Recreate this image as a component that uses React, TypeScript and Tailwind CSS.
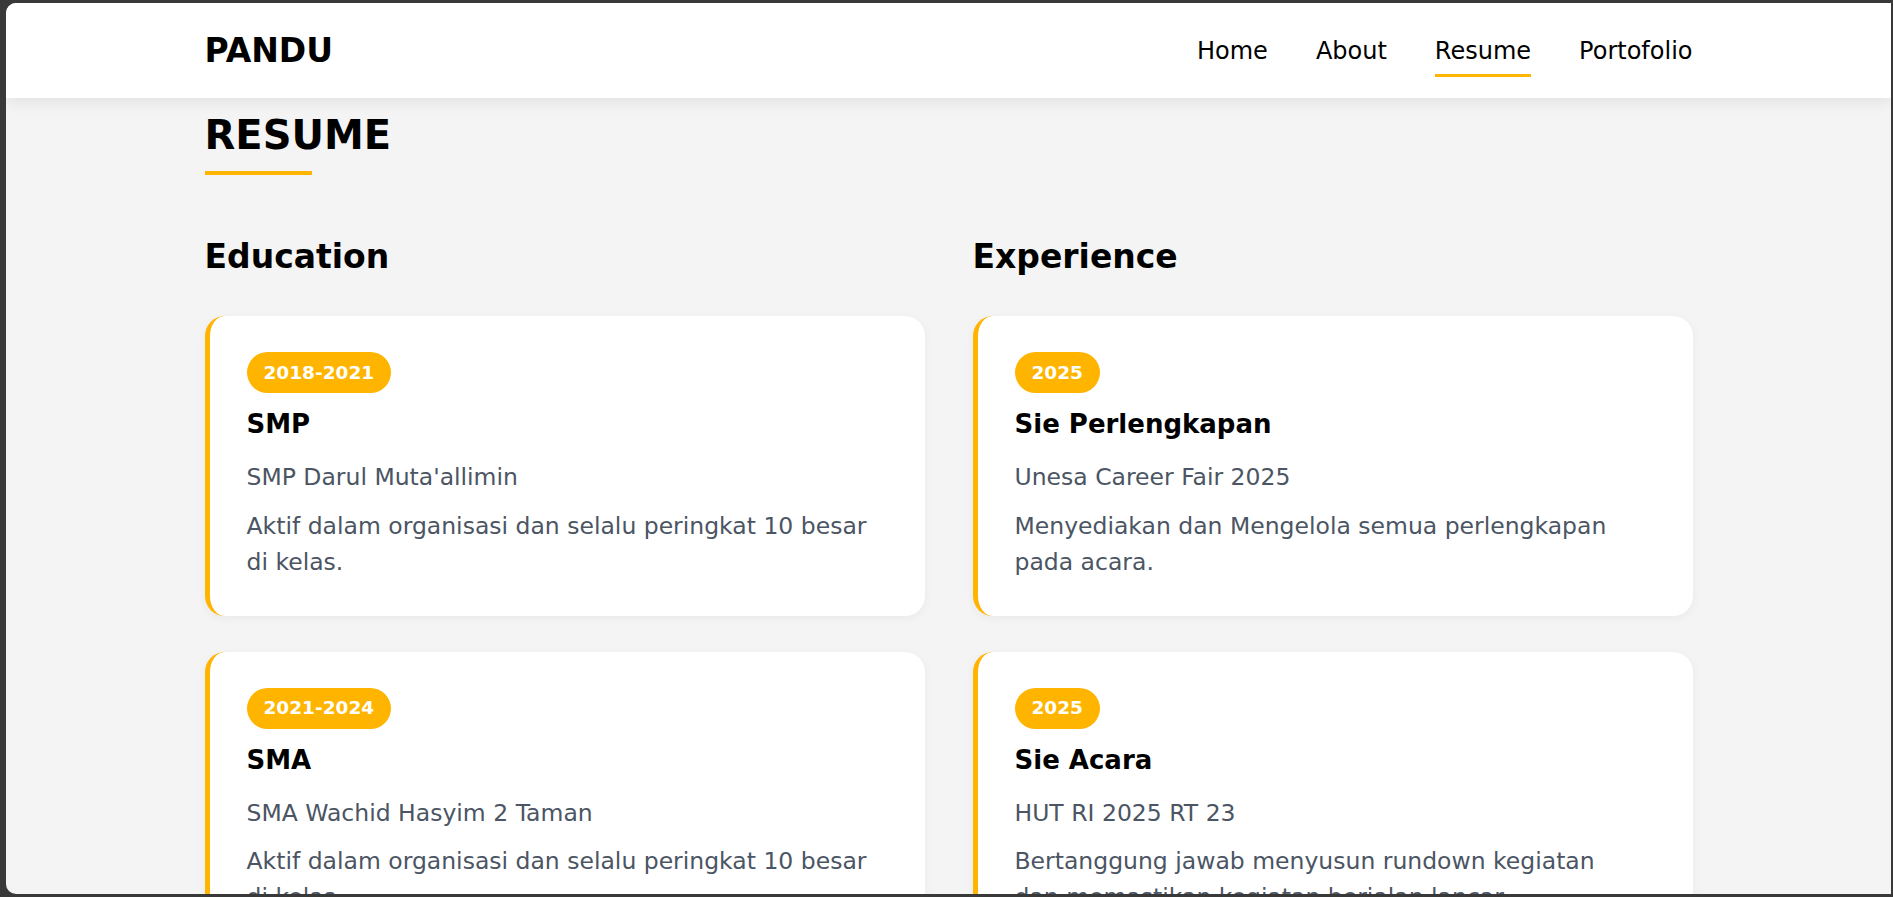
import React from "react";

type Entry = { period: string; title: string; place: string; desc: string };

const education: Entry[] = [
  {
    period: "2018-2021",
    title: "SMP",
    place: "SMP Darul Muta'allimin",
    desc: "Aktif dalam organisasi dan selalu peringkat 10 besar di kelas.",
  },
  {
    period: "2021-2024",
    title: "SMA",
    place: "SMA Wachid Hasyim 2 Taman",
    desc: "Aktif dalam organisasi dan selalu peringkat 10 besar di kelas.",
  },
];

const experience: Entry[] = [
  {
    period: "2025",
    title: "Sie Perlengkapan",
    place: "Unesa Career Fair 2025",
    desc: "Menyediakan dan Mengelola semua perlengkapan pada acara.",
  },
  {
    period: "2025",
    title: "Sie Acara",
    place: "HUT RI 2025 RT 23",
    desc: "Bertanggung jawab menyusun rundown kegiatan dan memastikan kegiatan berjalan lancar.",
  },
];

const links = ["Home", "About", "Resume", "Portofolio"];

function ResumeCard({ item }: { item: Entry }) {
  return (
    <div className="rounded-[20px] border-l-[5px] border-[#ffb400] bg-white pt-[36px] pb-[36px] pl-[37px] pr-[36px] shadow-[0_2px_10px_rgba(0,0,0,0.05)]">
      <span className="inline-flex h-[41px] items-center rounded-full bg-[#ffb400] px-[17px] text-[18.5px] font-bold text-white">
        {item.period}
      </span>
      <h3 className="mt-[18px] text-[26px] leading-[26px] font-bold text-black">{item.title}</h3>
      <p className="mt-[29px] text-[23.5px] leading-[23.5px] text-[#4b5563]">{item.place}</p>
      <p className="mt-[18px] max-w-[625px] text-[23.5px] leading-[36px] text-[#4b5563]">{item.desc}</p>
    </div>
  );
}

function Column({ heading, items }: { heading: string; items: Entry[] }) {
  return (
    <div>
      <h2 className="text-[33px] leading-[33px] font-bold text-black">{heading}</h2>
      <div className="mt-[43px] flex flex-col gap-[36px]">
        {items.map((item) => (
          <ResumeCard key={item.title} item={item} />
        ))}
      </div>
    </div>
  );
}

export default function App() {
  return (
    <div className="h-[897px] w-full overflow-hidden bg-[#393939] pt-[3px] pb-[3px] pl-[6px] pr-[2px] font-['DejaVu_Sans',sans-serif]">
      <div className="relative h-full overflow-hidden rounded-l-[10px] bg-[#f4f4f4]">
        <header className="relative z-10 h-[95px] bg-white shadow-[0_4px_14px_rgba(0,0,0,0.08)]">
          <div className="mx-auto flex h-full w-[1488px] items-center justify-between">
            <span className="text-[33px] font-bold text-black">PANDU</span>
            <nav className="flex items-center gap-[48px]">
              {links.map((link) => (
                <a key={link} href="#" className="relative text-[24px] leading-[34px] text-black">
                  {link}
                  {link === "Resume" && (
                    <span className="absolute top-full right-0 left-0 mt-[6px] h-[3px] bg-[#ffb400]" />
                  )}
                </a>
              ))}
            </nav>
          </div>
        </header>

        <main className="mx-auto w-[1488px] pt-[17px]">
          <h1 className="text-[40px] leading-[40px] font-bold text-black">RESUME</h1>
          <div className="mt-[16px] h-[4px] w-[107px] bg-[#ffb400]" />

          <div className="mt-[65px] grid grid-cols-2 gap-[48px]">
            <Column heading="Education" items={education} />
            <Column heading="Experience" items={experience} />
          </div>
        </main>
      </div>
    </div>
  );
}
